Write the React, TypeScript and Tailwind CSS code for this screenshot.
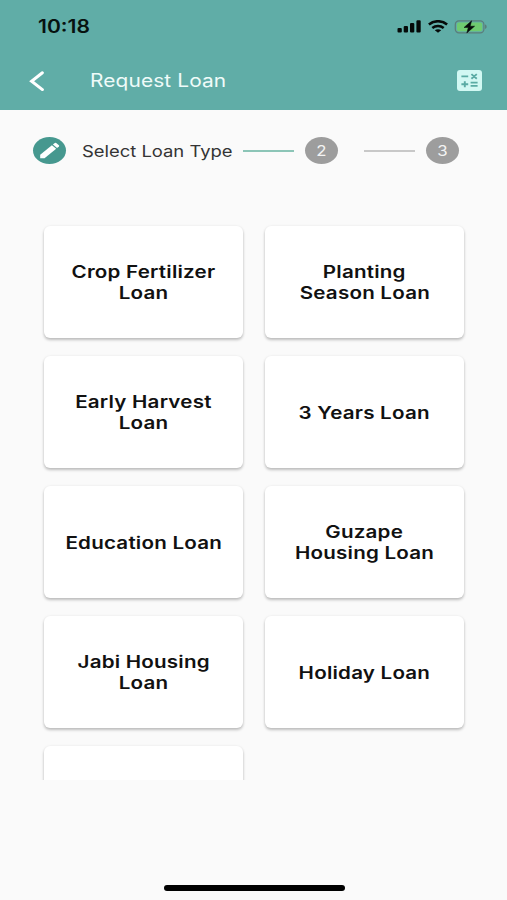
const loans: string[][] = [
  ['Crop Fertilizer', 'Loan'],
  ['Planting', 'Season Loan'],
  ['Early Harvest', 'Loan'],
  ['3 Years Loan'],
  ['Education Loan'],
  ['Guzape', 'Housing Loan'],
  ['Jabi Housing', 'Loan'],
  ['Holiday Loan'],
  [],
];

function StatusBar() {
  return (
    <div className="flex h-[53px] items-center justify-between pl-[38px] pr-[20px]">
      <span className="origin-left scale-x-[1.17] text-[18px] font-semibold leading-none text-[#07110f]">
        10:18
      </span>
      <div className="flex items-center">
        <svg className="h-[13px] w-[24px]" viewBox="0 0 24 13" fill="#050a09">
          <rect x="0.5" y="8" width="4.3" height="4.5" rx="1.1" />
          <rect x="6.7" y="6" width="4.3" height="6.5" rx="1.1" />
          <rect x="13" y="3" width="4.3" height="9.5" rx="1.1" />
          <rect x="19.4" y="0.3" width="4.3" height="12.2" rx="1.1" />
        </svg>
        <svg
          className="ml-[7px] h-[13px] w-[20px]"
          viewBox="0 0 20 13"
          fill="none"
          stroke="#050a09"
          strokeWidth="2.5"
        >
          <path d="M0.9 4.5C6 0.1 14 0.1 19.1 4.5" />
          <path d="M4.3 8C7.6 5.2 12.4 5.2 15.7 8" />
          <path d="M10 12.8L6.8 10.3C8.6 8.9 11.4 8.9 13.2 10.3Z" fill="#050a09" stroke="none" />
        </svg>
        <svg className="ml-[6px] h-[14px] w-[33px]" viewBox="0 0 33 14">
          <rect x="1.3" y="0.8" width="28.6" height="12" rx="3.6" fill="none" stroke="#5b7d7a" strokeWidth="1.2" />
          <rect x="3" y="2.4" width="25.2" height="8.8" rx="2" fill="#6fcb70" />
          <path d="M31 4.6C33.2 5.2 33.2 8.4 31 9Z" fill="#5b7d7a" />
          <path
            d="M17.6 0.8L10 7.5H14.3L12.8 13L20.6 6.2H16.2Z"
            fill="#050a09"
            stroke="#050a09"
            strokeWidth="0.5"
            strokeLinejoin="round"
          />
        </svg>
      </div>
    </div>
  );
}

function AppBar() {
  return (
    <div className="flex h-[55px] items-center pl-[28px] pr-[25px]">
      <svg className="h-[20px] w-[17px]" viewBox="0 0 17 20" fill="none">
        <path d="M14.4 1.8L3.6 10.2L14.4 18.6" stroke="#fff" strokeWidth="3" strokeLinecap="round" />
      </svg>
      <h1 className="ml-[45px] origin-left scale-x-[1.16] text-[18px] leading-none tracking-[0.1px] text-[#effbf9]">
        Request Loan
      </h1>
      <svg className="ml-auto h-[21px] w-[25px]" viewBox="0 0 25 21">
        <rect width="25" height="21" rx="3" fill="#d2f8f3" />
        <g stroke="#5aaba4" strokeWidth="1.9">
          <path d="M4.4 6.4H11.2M14.4 4.1L19.8 8.7M19.8 4.1L14.4 8.7" />
          <path d="M4.4 14.2H11.2M7.8 11.2V17.2M13.6 12.6H20.6M13.6 15.9H20.6" />
        </g>
      </svg>
    </div>
  );
}

function StepBadge({ n }: { n: number }) {
  return (
    <div className="flex h-[27px] w-[33px] items-center justify-center rounded-[50%] bg-[#9d9d9d]">
      <span className="scale-x-[1.2] text-[14px] leading-none text-[#f3f3f3]">{n}</span>
    </div>
  );
}

function Stepper() {
  return (
    <div className="flex h-[27px] items-center pl-[33px]">
      <div className="flex h-[27px] w-[33px] items-center justify-center rounded-[50%] bg-[#46988f]">
        <svg className="h-[17px] w-[21px]" viewBox="0 0 21 17" fill="#fff">
          <path d="M1.2 16.2V12.7L12.9 3.3L17.2 6.8L5.5 16.2Z" />
          <path d="M13.9 2.5L15.8 1Q16.5 0.5 17.2 1L19.9 3.2Q20.5 3.8 19.9 4.5L18.1 6Z" />
        </svg>
      </div>
      <div className="ml-[16px] w-[161px]">
        <div className="origin-left scale-x-[1.15] whitespace-nowrap text-[16px] leading-none text-[#343434]">
          Select Loan Type
        </div>
      </div>
      <div className="h-[2px] w-[51px] bg-[#8cc5b7]" />
      <div className="ml-[11px]">
        <StepBadge n={2} />
      </div>
      <div className="ml-[26px] h-[2px] w-[51px] bg-[#c8c8c8]" />
      <div className="ml-[11px]">
        <StepBadge n={3} />
      </div>
    </div>
  );
}

function LoanCard({ lines }: { lines: string[] }) {
  return (
    <button className="flex h-[112px] w-[199px] flex-col items-center justify-center rounded-[6px] bg-white pt-[2px] shadow-[0_2px_3px_rgba(0,0,0,0.24),0_0_3px_rgba(0,0,0,0.06)]">
      {lines.map((line) => (
        <span
          key={line}
          className="scale-x-[1.21] whitespace-nowrap text-[17px] font-semibold leading-[21px] tracking-[0.18px] text-[#111]"
        >
          {line}
        </span>
      ))}
    </button>
  );
}

export default function App() {
  return (
    <div className="flex h-[900px] w-[507px] flex-col overflow-hidden bg-[#fafafa] font-['Inter','Liberation_Sans',sans-serif]">
      <header className="h-[110px] shrink-0 bg-[#60ada7]">
        <StatusBar />
        <AppBar />
      </header>

      <div className="mt-[27px]">
        <Stepper />
      </div>

      <main className="mt-[52px] h-[564px] overflow-hidden pl-[44px] pt-[10px]">
        <div className="grid grid-cols-[199px_199px] gap-x-[22px] gap-y-[18px]">
          {loans.map((lines, i) => (
            <LoanCard key={i} lines={lines} />
          ))}
        </div>
      </main>

      <div className="mb-[9px] ml-[164px] mt-auto h-[6px] w-[181px] rounded-full bg-black" />
    </div>
  );
}
